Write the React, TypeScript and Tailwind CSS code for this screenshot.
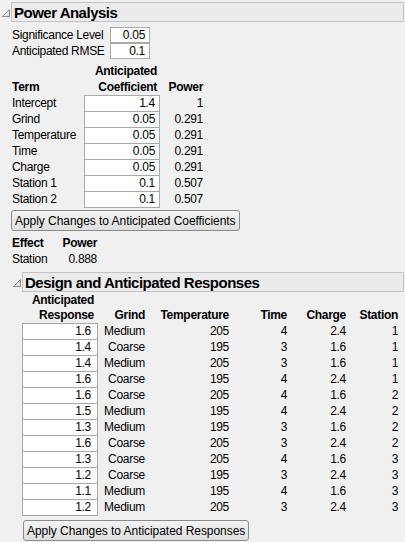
const coefRows = [
  { term: "Intercept", coef: "1.4", power: "1" },
  { term: "Grind", coef: "0.05", power: "0.291" },
  { term: "Temperature", coef: "0.05", power: "0.291" },
  { term: "Time", coef: "0.05", power: "0.291" },
  { term: "Charge", coef: "0.05", power: "0.291" },
  { term: "Station 1", coef: "0.1", power: "0.507" },
  { term: "Station 2", coef: "0.1", power: "0.507" },
];

const designRows = [
  ["1.6", "Medium", "205", "4", "2.4", "1"],
  ["1.4", "Coarse", "195", "3", "1.6", "1"],
  ["1.4", "Medium", "205", "3", "1.6", "1"],
  ["1.6", "Coarse", "195", "4", "2.4", "1"],
  ["1.6", "Coarse", "205", "4", "1.6", "2"],
  ["1.5", "Medium", "195", "4", "2.4", "2"],
  ["1.3", "Medium", "195", "3", "1.6", "2"],
  ["1.6", "Coarse", "205", "3", "2.4", "2"],
  ["1.3", "Coarse", "205", "4", "1.6", "3"],
  ["1.2", "Coarse", "195", "3", "2.4", "3"],
  ["1.1", "Medium", "195", "4", "1.6", "3"],
  ["1.2", "Medium", "205", "3", "2.4", "3"],
];

function Disclosure() {
  return (
    <svg width="10" height="10" viewBox="0 0 10 10" className="shrink-0">
      <polygon points="8.5,1.5 8.5,8.5 1.5,8.5" fill="#e4e4e4" stroke="#8c8c8c" strokeWidth="1" />
    </svg>
  );
}

function OutlineHeader({ title }: { title: string }) {
  return (
    <div className="flex items-center">
      <div className="w-[11px] flex justify-start pl-px pt-px">
        <Disclosure />
      </div>
      <div className="flex-1 h-[20px] mr-[1px] border border-[#c3c3c3] bg-[#ebebeb] pl-[2px] flex items-center">
        <span className="text-[15px] font-bold leading-none tracking-[-0.5px] text-black">{title}</span>
      </div>
    </div>
  );
}

// stacked input boxes sharing their borders, 16px per row
function CellColumn({ values, w, pad }: { values: string[]; w: string; pad: string }) {
  return (
    <div className={`${w} flex flex-col border-t border-[#a9a9a9]`}>
      {values.map((v, i) => (
        <div key={i} className={`h-[16px] bg-white border-x border-b border-[#a9a9a9] text-right ${pad} leading-[15px]`}>
          {v}
        </div>
      ))}
    </div>
  );
}

function Field({ value }: { value: string }) {
  return (
    <div className="w-[40px] h-[16px] bg-white border border-[#a9a9a9] text-right pr-[4px] leading-[14px]">
      {value}
    </div>
  );
}

function Button({ label }: { label: string }) {
  return (
    <button className="h-[21px] px-[3px] rounded-[3px] border border-[#8a8a8a] bg-gradient-to-b from-[#f4f4f4] to-[#dedede] text-[12px] tracking-[-0.05px] leading-none text-black">
      {label}
    </button>
  );
}

export default function App() {
  return (
    <div
      className="w-[405px] h-[542px] overflow-hidden bg-[#f0f0f0] text-[12px] tracking-[-0.3px] text-black pt-[2px]"
      style={{ fontFamily: '"Segoe UI", "Liberation Sans", Arial, sans-serif' }}
    >
      <OutlineHeader title="Power Analysis" />

      <div className="pl-[12px]">
        {/* settings */}
        <div className="mt-[5px] flex flex-col">
          <div className="flex items-start">
            <span className="w-[98px] leading-[16px]">Significance Level</span>
            <Field value="0.05" />
          </div>
          <div className="flex items-start">
            <span className="w-[98px] leading-[16px]">Anticipated RMSE</span>
            <Field value="0.1" />
          </div>
        </div>

        {/* coefficients */}
        <div className="mt-[4px] flex">
          <div className="w-[72px]">
            <div className="h-[16px]" />
            <div className="h-[16px] font-bold leading-[16px]">Term</div>
            {coefRows.map((r) => (
              <div key={r.term} className="h-[16px] leading-[17px]">{r.term}</div>
            ))}
          </div>
          <div className="w-[76px]">
            <div className="h-[16px] font-bold leading-[16px] text-right pr-[3px]">Anticipated</div>
            <div className="h-[16px] font-bold leading-[16px] text-right pr-[3px]">Coefficient</div>
            <CellColumn values={coefRows.map((r) => r.coef)} w="w-[76px]" pad="pr-[4px]" />
          </div>
          <div className="w-[43px] text-right">
            <div className="h-[16px]" />
            <div className="h-[16px] font-bold leading-[16px]">Power</div>
            {coefRows.map((r) => (
              <div key={r.term} className="h-[16px] leading-[17px]">{r.power}</div>
            ))}
          </div>
        </div>

        <div className="mt-[2px] -ml-px">
          <Button label="Apply Changes to Anticipated Coefficients" />
        </div>

        <div className="mt-[4px] flex">
          <div className="w-[49px]">
            <div className="h-[16px] font-bold leading-[16px]">Effect</div>
            <div className="h-[16px] leading-[16px]">Station</div>
          </div>
          <div className="w-[36px] text-right">
            <div className="h-[16px] font-bold leading-[16px]">Power</div>
            <div className="h-[16px] leading-[16px]">0.888</div>
          </div>
        </div>
      </div>

      <div className="mt-[5px] pl-[11px]">
        <OutlineHeader title="Design and Anticipated Responses" />
      </div>

      <div className="pl-[22px] mt-[1px]">
        <div className="flex font-bold">
          <div className="w-[76px] text-right pr-[4px]">
            <div className="h-[15px] leading-[15px]">Anticipated</div>
            <div className="h-[15px] leading-[15px]">Response</div>
          </div>
          <div className="w-[47px] text-right pt-[15px] leading-[15px]">Grind</div>
          <div className="w-[84px] text-right pt-[15px] leading-[15px]">Temperature</div>
          <div className="w-[58px] text-right pt-[15px] leading-[15px]">Time</div>
          <div className="w-[59px] text-right pt-[15px] leading-[15px]">Charge</div>
          <div className="w-[52px] text-right pt-[15px] leading-[15px]">Station</div>
        </div>

        <div className="flex">
          <CellColumn values={designRows.map((r) => r[0])} w="w-[76px]" pad="pr-[6px]" />
          <div className="flex flex-col">
            {designRows.map((r, i) => (
              <div key={i} className="flex h-[16px] leading-[17px] text-right">
                <div className="w-[47px]">{r[1]}</div>
                <div className="w-[84px]">{r[2]}</div>
                <div className="w-[58px]">{r[3]}</div>
                <div className="w-[59px]">{r[4]}</div>
                <div className="w-[52px]">{r[5]}</div>
              </div>
            ))}
          </div>
        </div>

        <div className="mt-[4px] ml-px">
          <Button label="Apply Changes to Anticipated Responses" />
        </div>
      </div>
    </div>
  );
}
